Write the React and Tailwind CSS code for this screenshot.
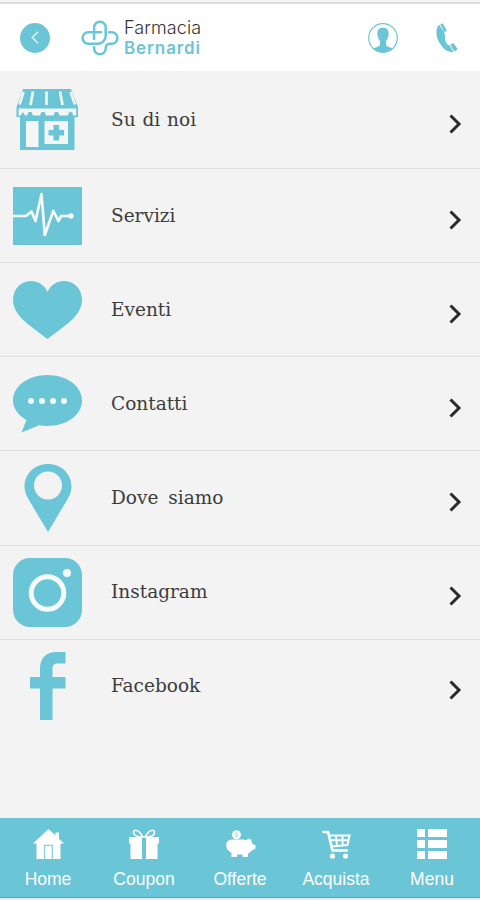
import { Fragment } from "react";

function LogoMark() {
  return (
    <svg width="38" height="36" viewBox="0 0 38 36" fill="none" stroke="#6ac5d7" strokeWidth="2.5" strokeLinecap="round">
      <path d="M20 12.300H7.300a5.700 5.700 0 0 0 0 11.400H17a7.800 7.800 0 0 0 7.700-7.700V7.500a5.800 5.800 0 0 0-11.600 0V19" />
      <path d="M13.100 27v1.500a5.800 5.800 0 0 0 11.600 0c0-3 1.300-4.800 4-4.800h2a5.700 5.700 0 0 0 0-11.400H28" />
    </svg>
  );
}

function UserIcon() {
  return (
    <svg width="30" height="30" viewBox="0 0 30 30">
      <circle cx="15" cy="15" r="14.300" fill="none" stroke="#6ac5d7" strokeWidth="1.200" />
      <path
        fill="#6ac5d7"
        d="M15 4.800c-3.900 0-5.600 2-5.500 5.400-.6.600-.2 2.600.5 3 .3 2 .9 3.500 1.900 4.500v4.500c-1 1.500-4.400 1.800-6.600 3.400A14.200 14.200 0 0 0 15 29.600a14.200 14.200 0 0 0 9.700-4c-2.200-1.600-5.600-1.900-6.600-3.400v-4.500c1-1 1.600-2.500 1.900-4.500.7-.4 1.100-2.400.5-3 .1-3.400-1.600-5.400-5.500-5.400z"
      />
    </svg>
  );
}

function PhoneIcon() {
  return (
    <svg width="22" height="30" viewBox="0 0 22 30" fill="#6ac5d7">
      <path d="M3.300 1.800C-.6 4.500-.4 13 3.200 19.500c3.700 6.700 8.900 10.300 14.300 9.300l-4-6.500c-1 .2-2.300-.8-3.300-2.600-1.200-2.200-1.600-4.600-.8-6.200L8 9z" />
      <path d="M4.300 1.300 6.700.2l4 7.300-2.300 2zM14.300 21.800l3-1.900 4.500 6.300-3.500 2.300z" />
    </svg>
  );
}

function ShopIcon() {
  return (
    <svg width="64" height="62" viewBox="0 0 64 62">
      <path fill="#6ac5d7" d="M7 0h48l7 18v10h-3.500v33H4V28H.5V18z" />
      <path
        d="M7.500 3 3.500 15.500M17 2.500l-2.500 13.500M30.500 2.500V16M44 2.500 46.500 16M54.500 3l4.500 12.500"
        stroke="#f4f6f6"
        strokeWidth="2.700"
        fill="none"
      />
      <path
        fill="#f4f6f6"
        d="M2.500 19.500h57.700v7h-3l-1-3-2.500-1-2 4H43.500l-1.500-3.500h-3L37.500 26.500H30l-1.500-3.500h-3L24 26.500h-7l-1.500-3.500h-3L11 26.500H9l-2-3.500-2.500 3.500h-2z"
      />
      <path fill="#f4f6f6" d="M10 32h12.500v26H10zM28.500 32H52v23H28.500z" />
      <path fill="#6ac5d7" d="M37.500 36h5.600v5h5v5.600h-5v5h-5.600v-5h-5V41h5z" />
    </svg>
  );
}

function PulseIcon() {
  return (
    <svg width="69" height="58" viewBox="0 0 69 58">
      <path fill="#6ac5d7" d="M0 0h69v58H0z" />
      <path
        d="M0 29h13l5.500-4.500L22.500 34l6-27 3.300 41 8.500-24L45.500 34l2.500-5h10"
        fill="none"
        stroke="#f7fafa"
        strokeWidth="2.700"
        strokeLinejoin="round"
      />
      <circle cx="58" cy="29" r="2.700" fill="#f7fafa" />
    </svg>
  );
}

function HeartIcon() {
  return (
    <svg width="69" height="58" viewBox="0 0 69 58" fill="#6ac5d7">
      <path d="M34.500 11C31 3.500 25 0 18 0 7.500 0 0 8.500 0 19c0 16 19 27 34.500 39C50 46 69 35 69 19 69 8.500 61.500 0 51 0c-7 0-13 3.500-16.500 11z" />
    </svg>
  );
}

function ChatIcon() {
  return (
    <svg width="69" height="58" viewBox="0 0 69 58" fill="#6ac5d7">
      <path d="M34.500 0C15.500 0 0 11 0 25.500c0 8 5.500 15 13.500 19.500L8.500 57.500 26 50.200c2.700.5 5.500.8 8.500.8C53.500 51 69 40 69 25.500S53.500 0 34.500 0z" />
      <g fill="#f7fafa">
        <circle cx="18" cy="26" r="3" />
        <circle cx="29" cy="26" r="3" />
        <circle cx="40" cy="26" r="3" />
        <circle cx="51" cy="26" r="3" />
      </g>
    </svg>
  );
}

function PinIcon() {
  return (
    <svg width="48" height="68" viewBox="0 0 48 68" fill="#6ac5d7" fillRule="evenodd">
      <path d="M24 0C10.500 0 .5 10 .5 22.500c0 5 1.700 8.500 4 12.700L24 68l19.500-32.800c2.300-4.200 4-7.700 4-12.700C47.500 10 37.500 0 24 0zm0 7.500a14 14 0 1 1 0 28 14 14 0 0 1 0-28z" />
    </svg>
  );
}

function InstagramIcon() {
  return (
    <svg width="69" height="69" viewBox="0 0 69 69">
      <rect width="69" height="69" rx="17" fill="#6ac5d7" />
      <circle cx="34.500" cy="35" r="16.300" fill="none" stroke="#f7fafa" strokeWidth="5" />
      <circle cx="54" cy="15" r="4" fill="#f7fafa" />
    </svg>
  );
}

function FacebookIcon() {
  return (
    <svg width="36" height="68" viewBox="0 0 36 68" fill="#6ac5d7">
      <path d="M35.500 0v11.500H28c-4 0-5.500 2-5.500 5.500v8h13v11.500h-13V68H10V36.500H0V25h10v-8C10 6 16 0 26.500 0z" />
    </svg>
  );
}

function HomeIcon() {
  return (
    <svg width="31" height="30" viewBox="0 0 31 30" fill="#fff">
      <path d="M15.500 0 0 14.500h3.500V30h7.700V15.800h8.600V30h7.700V14.500H31l-5-4.700V3.500h-3.500v3z" />
      <path d="M12.200 16.800h6.600V30h-6.600z" />
    </svg>
  );
}

function GiftIcon() {
  return (
    <svg width="30" height="30" viewBox="0 0 30 30" fill="#fff">
      <path d="M0 8h13v6.500H0zM17 8h13v6.500H17zM1.500 14.500H13V30H1.500zM17 14.500h11.500V30H17z" />
      <path
        d="M14 8C9 8 4.500 6.500 4.500 3.500c0-3.500 4-2.500 6-.2C12 5 13 6.500 14 8zm2 0c5 0 9.500-1.500 9.500-4.500 0-3.500-4-2.500-6-.2C18 5 17 6.500 16 8z"
        fill="none"
        stroke="#fff"
        strokeWidth="1.600"
      />
    </svg>
  );
}

function PiggyIcon() {
  return (
    <svg width="31" height="29" viewBox="0 0 31 29" fill="#fff">
      <path d="M1.500 13C2.500 9.800 6 9.500 10 9.500h7.500c1.500 0 2.800.3 4 .8l2-2 .8 1.300L26 9l.7 3.500 1 1.500 2.800 1.200v3.300L27 20.500l-4 3.200V27h-5.500v-2.500H12V27H6.500v-4.200C2.500 21 .5 17 1.500 13z" />
      <circle cx="11.500" cy="4.800" r="4.500" />
      <path d="M12.800 3.200c-2.300-.8-2.700 1-1.300 1.500 1.700.5 1.300 2.500-1.200 1.600" stroke="#6ac5d7" strokeWidth=".8" fill="none" />
    </svg>
  );
}

function CartIcon() {
  return (
    <svg width="29" height="29" viewBox="0 0 29 29" fill="none" stroke="#fff">
      <path d="M1.500 2H6l4.500 18.500H25" strokeWidth="2.600" strokeLinecap="round" />
      <path d="M7 5.500h20.500L25.500 15 9.500 16.500M8 10.300h18.500M14 5.500l1 10.500M20.500 5.500V15.500" strokeWidth="2" />
      <circle cx="10.500" cy="26" r="2.600" fill="#fff" stroke="none" />
      <circle cx="23.500" cy="26" r="2.600" fill="#fff" stroke="none" />
    </svg>
  );
}

function MenuIcon() {
  return (
    <svg width="30" height="30" viewBox="0 0 30 30" fill="#fff">
      <path d="M0 0h8v8H0zM11 0h19v8H11zM0 11h8v8H0zM11 11h19v8H11zM0 22h8v8H0zM11 22h19v8H11z" />
    </svg>
  );
}

const items = [
  { label: "Su di noi", icon: ShopIcon },
  { label: "Servizi", icon: PulseIcon },
  { label: "Eventi", icon: HeartIcon },
  { label: "Contatti", icon: ChatIcon },
  { label: "Dove siamo", icon: PinIcon },
  { label: "Instagram", icon: InstagramIcon },
  { label: "Facebook", icon: FacebookIcon },
];

const tabs = [
  { label: "Home", icon: HomeIcon },
  { label: "Coupon", icon: GiftIcon },
  { label: "Offerte", icon: PiggyIcon },
  { label: "Acquista", icon: CartIcon },
  { label: "Menu", icon: MenuIcon },
];

export default function App() {
  return (
    <div className="w-[480px] h-[900px] flex flex-col overflow-hidden bg-[#f3f3f3]">
      {/* HEADER */}
      <div className="h-[2px] shrink-0 bg-[#f4f4f4]" />
      <header className="h-[69px] shrink-0 flex items-center bg-white border-t-2 border-[#dededf] pl-5 pr-[22px]">
        <button className="w-[30px] h-[30px] rounded-full bg-[#6ac5d7] flex items-center justify-center">
          <svg width="8" height="13" viewBox="0 0 8 13" fill="none" stroke="#e6f6f9" strokeWidth="1.400">
            <path d="M7 .8 1.300 6.500 7 12.200" />
          </svg>
        </button>

        <div className="ml-[31px] flex items-center gap-[5px]">
          <LogoMark />
          <div className="font-['Inter','Liberation_Sans',sans-serif] text-[18px] leading-[20px]">
            <p className="font-light text-[#333] tracking-[0.1px]">Farmacia</p>
            <p className="font-semibold text-[#6ac5d7] text-[17px] tracking-[0.9px]">Bernardi</p>
          </div>
        </div>

        <div className="ml-auto flex items-center gap-[38px]">
          <UserIcon />
          <PhoneIcon />
        </div>
      </header>

      {/* LIST */}
      <main className="flex-1 pt-[3px]">
        {items.map(({ label, icon: Icon }, i) => (
          <Fragment key={label}>
            <button
              className={`w-full flex items-center pl-[13px] pr-[18px] text-left ${
                i === 0 ? "h-[94px] pb-[2px]" : "h-[93.150px]"
              }`}
            >
              <span className="w-[69px] flex justify-center">
                <Icon />
              </span>
              <span
                className={`ml-[29px] font-['DejaVu_Serif',serif] text-[18.5px] text-[#3c3c3c] ${
                  i === 0 ? "[word-spacing:1px]" : "[word-spacing:4px]"
                }`}
              >
                {label}
              </span>
              <svg
                className="ml-auto mt-[8px]"
                width="13"
                height="20"
                viewBox="0 0 13 20"
                fill="none"
                stroke="#2b2b2b"
                strokeWidth="3"
              >
                <path d="m1.500 1.500 8.500 8.500-8.500 8.500" />
              </svg>
            </button>
            {i < items.length - 1 && <div className="h-px bg-[#dedede]" />}
          </Fragment>
        ))}
      </main>

      {/* BOTTOM TABS */}
      <nav className="h-[80px] shrink-0 grid grid-cols-5 bg-[#6ac5d7] border-b border-[#5ba5b4] pt-[11px]">
        {tabs.map(({ label, icon: Icon }) => (
          <button key={label} className="flex flex-col items-center">
            <span className="h-[30px] flex items-center">
              <Icon />
            </span>
            <span className="mt-[7px] font-['Liberation_Sans',sans-serif] text-[17.5px] leading-[26px] text-white">
              {label}
            </span>
          </button>
        ))}
      </nav>
      <div className="h-[2px] shrink-0 bg-[#e3edef]" />
    </div>
  );
}
